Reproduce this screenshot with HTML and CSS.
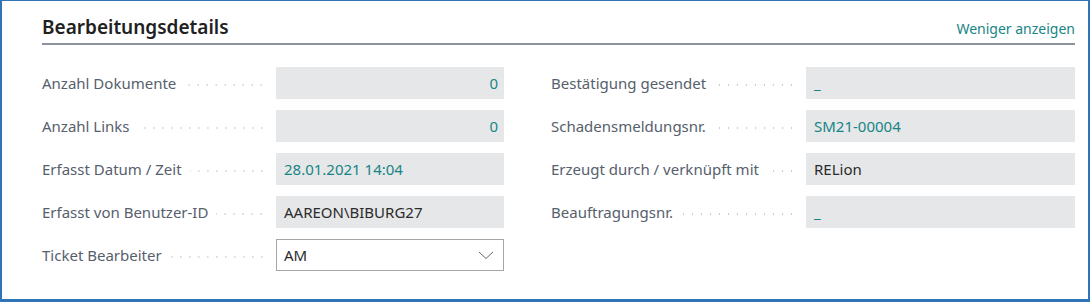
FILE: index.html
```html
<!DOCTYPE html>
<html lang="de">
<head>
  <meta charset="UTF-8">
  <meta name="viewport" content="width=device-width, initial-scale=1.0">
  <title>Bearbeitungsdetails</title>
  <link rel="stylesheet" href="styles.css">
</head>
<body>
  <div class="frame">
    <div class="header">
      <h2>Bearbeitungsdetails</h2>
      <a class="toggle" href="#">Weniger anzeigen</a>
    </div>

    <div class="columns">
      <div class="col col-left">
        <div class="row">
          <div class="caption"><span>Anzahl Dokumente</span><i class="leader"></i></div>
          <div class="field num">0</div>
        </div>
        <div class="row">
          <div class="caption"><span>Anzahl Links</span><i class="leader"></i></div>
          <div class="field num">0</div>
        </div>
        <div class="row">
          <div class="caption"><span>Erfasst Datum / Zeit</span><i class="leader"></i></div>
          <div class="field link">28.01.2021 14:04</div>
        </div>
        <div class="row">
          <div class="caption"><span>Erfasst von Benutzer-ID</span><i class="leader"></i></div>
          <div class="field">AAREON\BIBURG27</div>
        </div>
        <div class="row">
          <div class="caption"><span>Ticket Bearbeiter</span><i class="leader"></i></div>
          <div class="field select">
            <span>AM</span>
            <svg width="16" height="10" viewBox="0 0 16 10"><path d="M1 2l7 6.5L15 2" fill="none" stroke="#666" stroke-width="1"/></svg>
          </div>
        </div>
      </div>

      <div class="col col-right">
        <div class="row">
          <div class="caption"><span>Bestätigung gesendet</span><i class="leader"></i></div>
          <div class="field link">_</div>
        </div>
        <div class="row">
          <div class="caption"><span>Schadensmeldungsnr.</span><i class="leader"></i></div>
          <div class="field link">SM21-00004</div>
        </div>
        <div class="row">
          <div class="caption"><span>Erzeugt durch / verknüpft mit</span><i class="leader"></i></div>
          <div class="field">RELion</div>
        </div>
        <div class="row">
          <div class="caption"><span>Beauftragungsnr.</span><i class="leader"></i></div>
          <div class="field link">_</div>
        </div>
      </div>
    </div>
  </div>
</body>
</html>
```

FILE: styles.css
```css
body {
  margin: 0;
  padding: 0;
  font-family: "Noto Sans", "Open Sans", sans-serif;
  background: #fff;
}

.frame {
  width: 1090px;
  height: 302px;
  box-sizing: border-box;
  border: 2px solid #2f75b5;
  border-top-width: 1px;
  border-bottom-width: 3px;
  padding: 0 13px 0 40px;
}

.header {
  display: flex;
  justify-content: space-between;
  align-items: flex-end;
  height: 42px;
  border-bottom: 2px solid #8d939c;
}

.header h2 {
  margin: 0 0 3px;
  font-size: 19px;
  font-weight: 600;
  color: #212121;
  line-height: 26px;
}

.toggle {
  color: #178585;
  text-decoration: none;
  font-size: 14px;
  line-height: 20px;
  margin-bottom: 4px;
}

.columns {
  display: flex;
  gap: 47px;
  padding-top: 22px;
}

.col {
  display: flex;
  flex-direction: column;
  gap: 11px;
}

.col-left {
  width: 462px;
}

.col-right {
  flex: 1;
}

.row {
  display: grid;
  height: 32px;
}

.col-left .row {
  grid-template-columns: 234px 1fr;
}

.col-right .row {
  grid-template-columns: 255px 1fr;
}

.caption {
  display: flex;
  align-items: center;
  color: #56606d;
  font-size: 15px;
  white-space: nowrap;
}

.leader {
  flex: 1;
  height: 2px;
  margin: 3px 10px 0 8px;
  background-image: radial-gradient(circle, #c6cacf 0.9px, transparent 1.1px);
  background-size: 9px 2px;
  background-repeat: repeat-x;
  background-position: right center;
}

.field {
  display: flex;
  align-items: center;
  background: #e6e7e9;
  padding: 0 8px;
  font-size: 15px;
  color: #2b2b2b;
}

.field.num {
  justify-content: flex-end;
  color: #178585;
  padding-right: 6px;
}

.field.link {
  color: #178585;
}

.field.select {
  justify-content: space-between;
  background: #fff;
  border: 1px solid #a6a6a6;
  padding: 0 9px 0 7px;
}
```
